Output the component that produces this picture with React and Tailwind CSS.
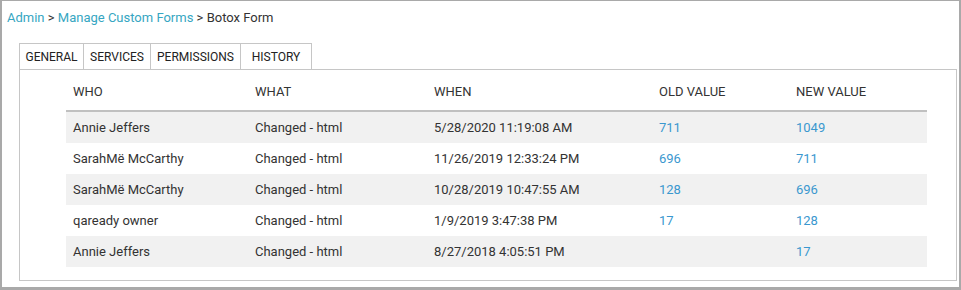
import React from "react";

const rows = [
  ["Annie Jeffers", "Changed - html", "5/28/2020 11:19:08 AM", "711", "1049"],
  ["SarahMë McCarthy", "Changed - html", "11/26/2019 12:33:24 PM", "696", "711"],
  ["SarahMë McCarthy", "Changed - html", "10/28/2019 10:47:55 AM", "128", "696"],
  ["qaready owner", "Changed - html", "1/9/2019 3:47:38 PM", "17", "128"],
  ["Annie Jeffers", "Changed - html", "8/27/2018 4:05:51 PM", "", "17"],
];

const tabs = [
  ["GENERAL", "w-[64px]"],
  ["SERVICES", "w-[67px]"],
  ["PERMISSIONS", "w-[90px]"],
  ["HISTORY", "w-[72px] border-r"],
];

export default function App() {
  return (
    <div
      className="w-[961px] h-[290px] bg-white border-t border-l-2 border-r-2 border-b-[3px] border-[#a9a9a9] flex flex-col text-[#333333]"
      style={{ fontFamily: "Roboto, 'Liberation Sans', sans-serif" }}
    >
      <div className="pl-[5px] pt-[9px] text-[13px] leading-[15px] h-[42px]">
        <span className="text-[#36a6c2]">Admin</span>
        <span> &gt; </span>
        <span className="text-[#36a6c2]">Manage Custom Forms</span>
        <span> &gt; </span>
        <span>Botox Form</span>
      </div>
      <div className="ml-[17px] mr-[2px] flex flex-col flex-1 mb-[6px]">
        <div className="flex h-[26px]">
          {tabs.map(([t, w]) => (
            <div
              key={t}
              className={`${w} border-l border-t border-[#c6c6c6] flex items-center justify-center text-[12px] text-[#222]`}
            >
              {t}
            </div>
          ))}
        </div>
        <div className="flex-1 border border-[#c6c6c6] pl-[46px] pr-[29px]">
          <div className="grid grid-cols-[182px_179px_225px_137px_137px] h-[42px] border-b-2 border-[#c0c0c0] text-[13px] items-center pt-[3px]">
            {["WHO", "WHAT", "WHEN", "OLD VALUE", "NEW VALUE"].map((h) => (
              <div key={h} className="pl-[7px]">{h}</div>
            ))}
          </div>
          {rows.map((r, i) => (
            <div
              key={i}
              className={`grid grid-cols-[182px_179px_225px_137px_137px] h-[31px] items-center text-[13px] ${i % 2 === 0 ? "bg-[#f1f1f1]" : "bg-white"}`}
            >
              <div className="pl-[7px]">{r[0]}</div>
              <div className="pl-[7px]">{r[1]}</div>
              <div className="pl-[7px]">{r[2]}</div>
              <div className="pl-[7px] text-[#3a98cf]">{r[3]}</div>
              <div className="pl-[7px] text-[#3a98cf]">{r[4]}</div>
            </div>
          ))}
        </div>
      </div>
    </div>
  );
}
